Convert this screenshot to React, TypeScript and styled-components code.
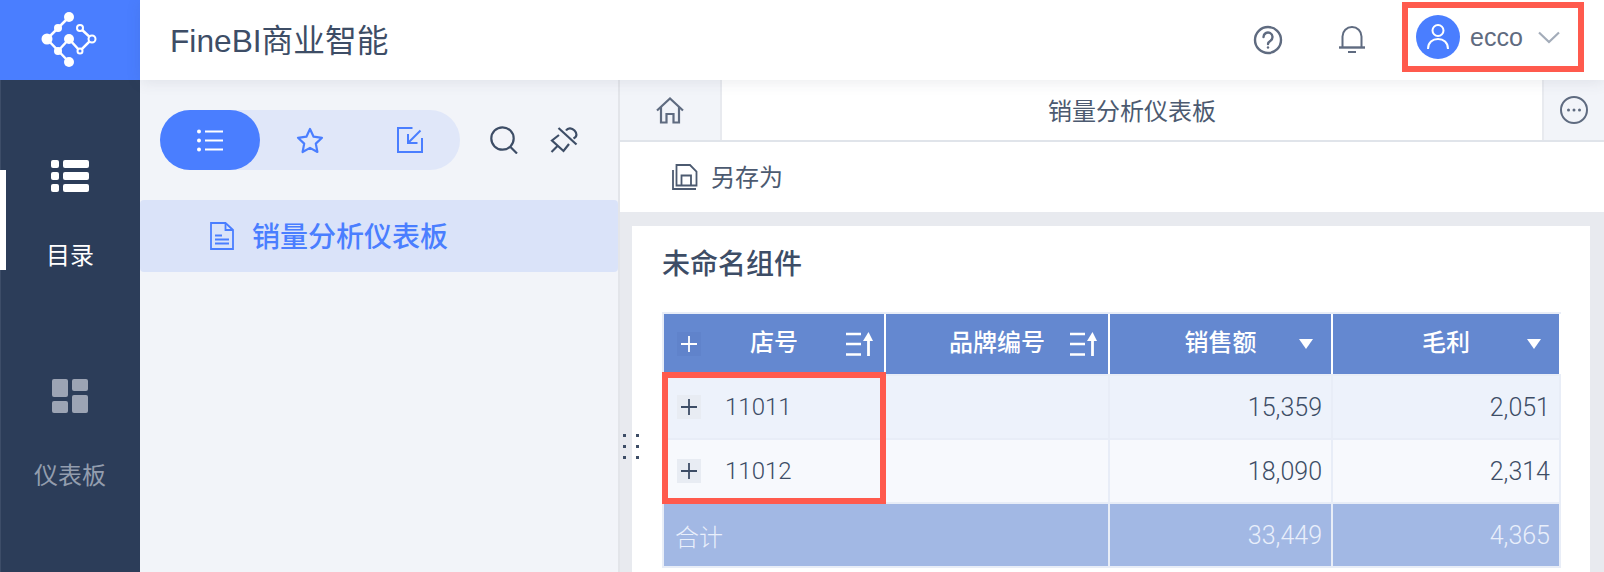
import React from 'react';
import styled, { createGlobalStyle } from 'styled-components';

const GlobalStyle = createGlobalStyle`
	html, body {
		margin: 0;
		height: 100%;
		overflow: hidden;
	}
	body {
		font-family: "Liberation Sans", "Noto Sans CJK SC", sans-serif;
		color: #3d4d66;
	}
	#root {
		height: 100%;
	}
`;

const Page = styled.div`
	display: grid;
	grid-template-columns: 140px 1fr;
	height: 100vh;
	overflow: hidden;
`;

const Nav = styled.nav`
	background: #2c3d59;
	border-left: 1px solid #3d4d68;
	display: flex;
	flex-direction: column;
`;

const Logo = styled.div`
	height: 80px;
	margin-left: -1px;
	background: #4a7eff;
	display: flex;
	align-items: center;
	justify-content: center;
`;

const NavList = styled.div`
	padding-top: 80px;
`;

const NavItem = styled.div<{ $active?: boolean }>`
	position: relative;
	height: 219px;
	margin-left: -1px;
	display: flex;
	flex-direction: column;
	align-items: center;
	gap: ${(p) => (p.$active ? '48px' : '47px')};
	color: ${(p) => (p.$active ? '#ffffff' : '#939dae')};
	font-size: 24px;
	line-height: 32px;
`;

const NavIndicator = styled.span`
	position: absolute;
	left: 0;
	top: 10px;
	width: 6px;
	height: 100px;
	background: #ffffff;
`;

const Main = styled.div`
	display: grid;
	grid-template-rows: 80px 1fr;
	min-width: 0;
`;

const Header = styled.header`
	position: relative;
	z-index: 1;
	background: #ffffff;
	box-shadow: 0 2px 14px rgba(60, 70, 90, 0.1);
	display: flex;
	align-items: center;
	padding: 0 20px 0 30px;
`;

const BrandTitle = styled.h1`
	margin: 0 0 5px;
	font-size: 31.7px;
	font-weight: 400;
	color: #3d4d66;
	flex: 1;
`;

const HeaderIcon = styled.button`
	border: 0;
	padding: 0;
	background: none;
	display: flex;
	margin-right: 56px;
`;

const UserBox = styled.div`
	box-sizing: border-box;
	width: 182px;
	height: 70px;
	margin-top: -6px;
	margin-left: -19px;
	border: 6px solid #ff5a4d;
	display: flex;
	align-items: center;
	padding-left: 8px;
	color: #5f6b80;
	font-size: 25px;
`;

const UserName = styled.span`
	margin-left: 10px;
	margin-right: 15px;
`;

const Body = styled.div`
	display: grid;
	grid-template-columns: 480px 1fr;
	min-height: 0;
`;

const Panel = styled.aside`
	background: #f2f4f9;
	border-right: 2px solid #e3e5ea;
	padding-top: 30px;
`;

const PanelTools = styled.div`
	display: flex;
	align-items: center;
	padding-left: 20px;
`;

const Pill = styled.div`
	display: flex;
	width: 300px;
	height: 60px;
	border-radius: 30px;
	background: #e0e7f9;
`;

const PillTab = styled.button<{ $active?: boolean }>`
	width: 100px;
	border: 0;
	padding: 0;
	border-radius: 30px;
	background: ${(p) => (p.$active ? '#4a7eff' : 'transparent')};
	display: flex;
	align-items: center;
	justify-content: center;
`;

const ToolIcon = styled.button<{ $gap: number }>`
	border: 0;
	padding: 0;
	background: none;
	display: flex;
	margin-left: ${(p) => p.$gap}px;
`;

const TreeRow = styled.div`
	height: 72px;
	margin-top: 30px;
	border-radius: 4px;
	background: #dae3f9;
	color: #4a7eff;
	font-size: 28px;
	font-weight: 500;
	display: flex;
	align-items: center;
	gap: 18px;
	padding-left: 70px;
	span {
		margin-bottom: 2px;
	}
`;

const Content = styled.section`
	display: grid;
	grid-template-rows: 62px 70px 1fr;
	min-width: 0;
	min-height: 0;
`;

const TabBar = styled.div`
	display: grid;
	grid-template-columns: 102px 1fr 62px;
	border-bottom: 2px solid #e0e4ea;
	font-size: 24px;
	color: #4c5a70;
`;

const TabIcon = styled.div<{ $side: 'left' | 'right' }>`
	background: #f2f4f9;
	display: flex;
	align-items: center;
	justify-content: center;
	${(p) => (p.$side === 'left' ? 'border-right' : 'border-left')}: 2px solid #e8eaef;
`;

const TabTitle = styled.div`
	display: flex;
	align-items: center;
	justify-content: center;
	padding-bottom: 2px;
`;

const Toolbar = styled.div`
	background: #ffffff;
	display: flex;
	align-items: center;
	gap: 13px;
	padding-left: 52px;
	font-size: 24px;
	color: #4c5a70;
	span {
		margin-bottom: 4px;
	}
`;

const Canvas = styled.div`
	position: relative;
	background: #e8eaef;
	padding: 14px 14px 0 12px;
	min-height: 0;
`;

const DragHandle = styled.div`
	position: absolute;
	left: 3px;
	top: 222px;
	display: grid;
	grid-template-columns: 3px 3px;
	column-gap: 10px;
	row-gap: 8px;
	i {
		width: 3px;
		height: 3px;
		background: #3d4d66;
	}
`;

const Card = styled.div`
	background: #ffffff;
	height: 100%;
	padding: 19px 0 0 30px;
	box-sizing: border-box;
`;

const CardTitle = styled.h2`
	margin: 0 0 27px;
	font-size: 28px;
	line-height: 40px;
	font-weight: 500;
	color: #3d4d66;
`;

const TableWrap = styled.div`
	position: relative;
	width: 899px;
`;

const Table = styled.div`
	display: grid;
	grid-template-columns: 220px 222px 221px 226px;
	grid-template-rows: 60px 62px 62px 62px;
	gap: 2px;
	padding: 2px;
	background: #e8edf7;
`;

const HeadCell = styled.div`
	position: relative;
	grid-row: 1;
	background: #6488d0;
	box-shadow: 2px 0 0 #ffffff;
	color: #ffffff;
	font-size: 24px;
	font-weight: 500;
	display: flex;
	align-items: center;
	justify-content: center;
	padding-bottom: 8px;
	&:last-of-type {
		box-shadow: none;
	}
`;

const HeadIcon = styled.span<{ $right: number }>`
	position: absolute;
	right: ${(p) => p.$right}px;
	top: 50%;
	transform: translateY(-50%);
	display: flex;
`;

const ExpandBox = styled.span<{ $head?: boolean }>`
	width: 24px;
	height: 24px;
	display: flex;
	flex: none;
	align-items: center;
	justify-content: center;
	background: ${(p) => (p.$head ? '#6083cb' : '#e8ecf3')};
`;

const HeadExpand = styled.span`
	position: absolute;
	left: 13px;
	top: 18px;
	display: flex;
`;

const Cell = styled.div<{ $even?: boolean; $numeric?: boolean }>`
	background: ${(p) => (p.$even ? '#f7f9fd' : '#edf2fb')};
	font-family: Roboto, "Noto Sans CJK SC", sans-serif;
	font-weight: 300;
	font-size: ${(p) => (p.$numeric ? '25px' : '24px')};
	color: #3d4d66;
	display: flex;
	align-items: center;
	gap: 24px;
	padding: 0 ${(p) => (p.$numeric ? '9px' : '0')} 0 13px;
	justify-content: ${(p) => (p.$numeric ? 'flex-end' : 'flex-start')};
`;

const TotalCell = styled.div<{ $span?: number; $numeric?: boolean }>`
	grid-column: span ${(p) => p.$span ?? 1};
	background: #a2b8e4;
	font-family: Roboto, "Noto Sans CJK SC", sans-serif;
	font-weight: 300;
	font-size: ${(p) => (p.$numeric ? '25px' : '24px')};
	color: #e9effb;
	display: flex;
	align-items: center;
	padding: 0 9px 0 11px;
	justify-content: ${(p) => (p.$numeric ? 'flex-end' : 'flex-start')};
`;

const Highlight = styled.div`
	position: absolute;
	left: 0;
	top: 60px;
	width: 224px;
	height: 132px;
	box-sizing: border-box;
	border: 6px solid #ff5a4d;
	pointer-events: none;
`;

const LogoMark = () => (
	<svg width="60" height="56" viewBox="40 12 60 56" fill="none">
		<path d="M69 17 47 39 69 62M58 51 69 39 80 51 92 39 80 28" stroke="#fff" strokeWidth="2.5" />
		<g fill="#fff">
			<circle cx="69" cy="17" r="5" />
			<circle cx="58" cy="28" r="4" />
			<circle cx="47" cy="39" r="5.5" />
			<circle cx="58" cy="51" r="4" />
			<circle cx="69" cy="62" r="5" />
			<circle cx="69" cy="39" r="5" />
		</g>
		<g fill="#4a7eff" stroke="#fff" strokeWidth="2">
			<circle cx="80" cy="28" r="3" />
			<circle cx="92" cy="39" r="3.5" />
			<circle cx="80" cy="51" r="2.5" />
		</g>
	</svg>
);

const CatalogIcon = () => (
	<svg width="38" height="32" viewBox="0 0 38 32" fill="#fff">
		<rect x="0" y="0" width="8" height="8" rx="2" />
		<rect x="0" y="12" width="8" height="8" rx="2" />
		<rect x="0" y="24" width="8" height="8" rx="2" />
		<rect x="12" y="0" width="26" height="8" rx="2" />
		<rect x="12" y="12" width="26" height="8" rx="2" />
		<rect x="12" y="24" width="26" height="8" rx="2" />
	</svg>
);

const DashboardIcon = () => (
	<svg width="36" height="34" viewBox="0 0 36 34" fill="#9ca4b4">
		<rect x="0" y="0" width="16" height="18" rx="2" />
		<rect x="0" y="22" width="16" height="12" rx="2" />
		<rect x="20" y="0" width="16" height="12" rx="2" />
		<rect x="20" y="16" width="16" height="18" rx="2" />
	</svg>
);

const HelpIcon = () => (
	<svg width="30" height="30" viewBox="0 0 30 30" fill="none" stroke="#5f6b80" strokeWidth="2.4">
		<circle cx="15" cy="15" r="13" />
		<path d="M10.500 12a4.500 4.500 0 1 1 7 3.700c-1.600 1-2.500 1.800-2.500 3.300" strokeLinecap="round" />
		<circle cx="15" cy="22.500" r="1.200" fill="#5f6b80" stroke="none" />
	</svg>
);

const BellIcon = () => (
	<svg width="26" height="28" viewBox="0 0 26 28" fill="none" stroke="#5f6b80" strokeWidth="2">
		<path d="M3.500 21V10.500a9.500 9.500 0 0 1 19 0V21" />
		<path d="M0 21.500H26" strokeWidth="2.400" />
		<path d="M9 26H17" />
	</svg>
);

const Avatar = () => (
	<svg width="44" height="44" viewBox="0 0 44 44" fill="none">
		<circle cx="22" cy="22" r="22" fill="#4a7eff" />
		<circle cx="22" cy="15.500" r="5.500" stroke="#fff" strokeWidth="2" />
		<path d="M12 34c0-6.500 4.500-10 10-10s10 3.500 10 10" stroke="#fff" strokeWidth="2" />
	</svg>
);

const Chevron = () => (
	<svg width="22" height="13" viewBox="0 0 22 13" fill="none" stroke="#a3acb9" strokeWidth="2.200">
		<path d="M1 1.500 11 11 21 1.500" />
	</svg>
);

const ListIcon = () => (
	<svg width="26" height="23" viewBox="0 0 26 23" fill="#fff">
		<circle cx="2" cy="2.500" r="2" />
		<circle cx="2" cy="11.500" r="2" />
		<circle cx="2" cy="20.500" r="2" />
		<rect x="8" y="1.500" width="18" height="2" />
		<rect x="8" y="10.500" width="18" height="2" />
		<rect x="8" y="19.500" width="18" height="2" />
	</svg>
);

const StarIcon = () => (
	<svg width="28" height="27" viewBox="0 0 28 27" fill="none" stroke="#4a7eff" strokeWidth="2.200" strokeLinejoin="round">
		<path d="M14 2 17.600 9.700 26 10.800 19.800 16.600 21.400 25 14 20.900 6.600 25 8.200 16.600 2 10.800 10.400 9.700Z" />
	</svg>
);

const ImportIcon = () => (
	<svg width="26" height="26" viewBox="0 0 26 26" fill="none" stroke="#4a7eff" strokeWidth="2">
		<path d="M15.500 1H1V25H25V11" />
		<path d="M23.500 3.500 11 16M11 7V16H20.500" />
	</svg>
);

const SearchIcon = () => (
	<svg width="28" height="28" viewBox="0 0 28 28" fill="none" stroke="#3d4d66" strokeWidth="2.200">
		<circle cx="12.500" cy="12.500" r="11.200" />
		<path d="M20.500 21 27 27.500" />
	</svg>
);

const PinIcon = () => (
	<svg width="28" height="27" viewBox="0 0 28 27" fill="none" stroke="#3d4d66" strokeWidth="2.200">
		<path d="M8.500 1 26.500 17.500" />
		<path d="M9 8 2 13.500 13.500 24 19 17" />
		<path d="M16 3.500C18 0.500 22 1 24.500 3.500S27.500 9.500 23.500 11.500" />
		<path d="M7.500 19 1.500 25" />
	</svg>
);

const DocIcon = () => (
	<svg width="24" height="28" viewBox="0 0 24 28" fill="none" stroke="#4a7eff" strokeWidth="1.800">
		<path d="M1 1H15.500L23 8V27H1Z" />
		<path d="M15.500 1V8H23" />
		<path d="M5 13.500H12M5 17.500H19M5 21.500H19" />
	</svg>
);

const HomeIcon = () => (
	<svg width="28" height="27" viewBox="0 0 28 27" fill="none" stroke="#5f6b80" strokeWidth="2.200">
		<path d="M1 13.500 14 1.500 27 13.500" />
		<path d="M5 10V25.500H10.500V17H17.500V25.500H23V10" />
	</svg>
);

const MoreIcon = () => (
	<svg width="28" height="28" viewBox="0 0 28 28" fill="none">
		<circle cx="14" cy="14" r="13" stroke="#5f6b80" strokeWidth="2" />
		<g fill="#5f6b80">
			<circle cx="8.500" cy="14" r="1.500" />
			<circle cx="14" cy="14" r="1.500" />
			<circle cx="19.500" cy="14" r="1.500" />
		</g>
	</svg>
);

const SaveAsIcon = () => (
	<svg width="26" height="26" viewBox="0 0 26 26" fill="none" stroke="#4c5a70" strokeWidth="1.800">
		<path d="M4.500 1H18L24.500 7.500V21.500H4.500Z" />
		<path d="M9.500 21.500V11.500H19V21.500" />
		<path d="M1 6V25H24" />
	</svg>
);

const SortIcon = () => (
	<svg width="27" height="24" viewBox="0 0 27 24" fill="none" stroke="#fff" strokeWidth="2.400">
		<path d="M0 2H15M0 12H15M0 22.500H15" />
		<path d="M22.500 24V4" strokeWidth="2.800" />
		<path d="M17 9 22.500 0 27 9Z" fill="#fff" stroke="none" />
	</svg>
);

const Caret = () => (
	<svg width="14" height="10" viewBox="0 0 14 10" fill="#fff">
		<path d="M0 0H14L7 10Z" />
	</svg>
);

const Plus = ({ color }: { color: string }) => (
	<svg width="16" height="16" viewBox="0 0 16 16" stroke={color} strokeWidth="1.800">
		<path d="M0 8H16M8 0V16" />
	</svg>
);

const rows = [
	{ id: '11011', sales: '15,359', profit: '2,051' },
	{ id: '11012', sales: '18,090', profit: '2,314' },
];

export default function App() {
	return (
		<Page>
			<GlobalStyle />
			<Nav>
				<Logo>
					<LogoMark />
				</Logo>
				<NavList>
					<NavItem $active>
						<NavIndicator />
						<CatalogIcon />
						<span>目录</span>
					</NavItem>
					<NavItem>
						<DashboardIcon />
						<span>仪表板</span>
					</NavItem>
				</NavList>
			</Nav>
			<Main>
				<Header>
					<BrandTitle>FineBI商业智能</BrandTitle>
					<HeaderIcon>
						<HelpIcon />
					</HeaderIcon>
					<HeaderIcon>
						<BellIcon />
					</HeaderIcon>
					<UserBox>
						<Avatar />
						<UserName>ecco</UserName>
						<Chevron />
					</UserBox>
				</Header>
				<Body>
					<Panel>
						<PanelTools>
							<Pill>
								<PillTab $active>
									<ListIcon />
								</PillTab>
								<PillTab>
									<StarIcon />
								</PillTab>
								<PillTab>
									<ImportIcon />
								</PillTab>
							</Pill>
							<ToolIcon $gap={30}>
								<SearchIcon />
							</ToolIcon>
							<ToolIcon $gap={32}>
								<PinIcon />
							</ToolIcon>
						</PanelTools>
						<TreeRow>
							<DocIcon />
							<span>销量分析仪表板</span>
						</TreeRow>
					</Panel>
					<Content>
						<TabBar>
							<TabIcon $side="left">
								<HomeIcon />
							</TabIcon>
							<TabTitle>销量分析仪表板</TabTitle>
							<TabIcon $side="right">
								<MoreIcon />
							</TabIcon>
						</TabBar>
						<Toolbar>
							<SaveAsIcon />
							<span>另存为</span>
						</Toolbar>
						<Canvas>
							<DragHandle>
								{Array.from({ length: 6 }, (_, i) => (
									<i key={i} />
								))}
							</DragHandle>
							<Card>
								<CardTitle>未命名组件</CardTitle>
								<TableWrap>
									<Table>
										<HeadCell>
											<HeadExpand>
												<ExpandBox $head>
													<Plus color="#fff" />
												</ExpandBox>
											</HeadExpand>
											店号
											<HeadIcon $right={11}>
												<SortIcon />
											</HeadIcon>
										</HeadCell>
										<HeadCell>
											品牌编号
											<HeadIcon $right={11}>
												<SortIcon />
											</HeadIcon>
										</HeadCell>
										<HeadCell>
											销售额
											<HeadIcon $right={18}>
												<Caret />
											</HeadIcon>
										</HeadCell>
										<HeadCell>
											毛利
											<HeadIcon $right={18}>
												<Caret />
											</HeadIcon>
										</HeadCell>
										{rows.map((row, i) => (
											<React.Fragment key={row.id}>
												<Cell $even={i === 1}>
													<ExpandBox>
														<Plus color="#3d4d66" />
													</ExpandBox>
													{row.id}
												</Cell>
												<Cell $even={i === 1} />
												<Cell $even={i === 1} $numeric>
													{row.sales}
												</Cell>
												<Cell $even={i === 1} $numeric>
													{row.profit}
												</Cell>
											</React.Fragment>
										))}
										<TotalCell $span={2}>合计</TotalCell>
										<TotalCell $numeric>33,449</TotalCell>
										<TotalCell $numeric>4,365</TotalCell>
									</Table>
									<Highlight />
								</TableWrap>
							</Card>
						</Canvas>
					</Content>
				</Body>
			</Main>
		</Page>
	);
}
